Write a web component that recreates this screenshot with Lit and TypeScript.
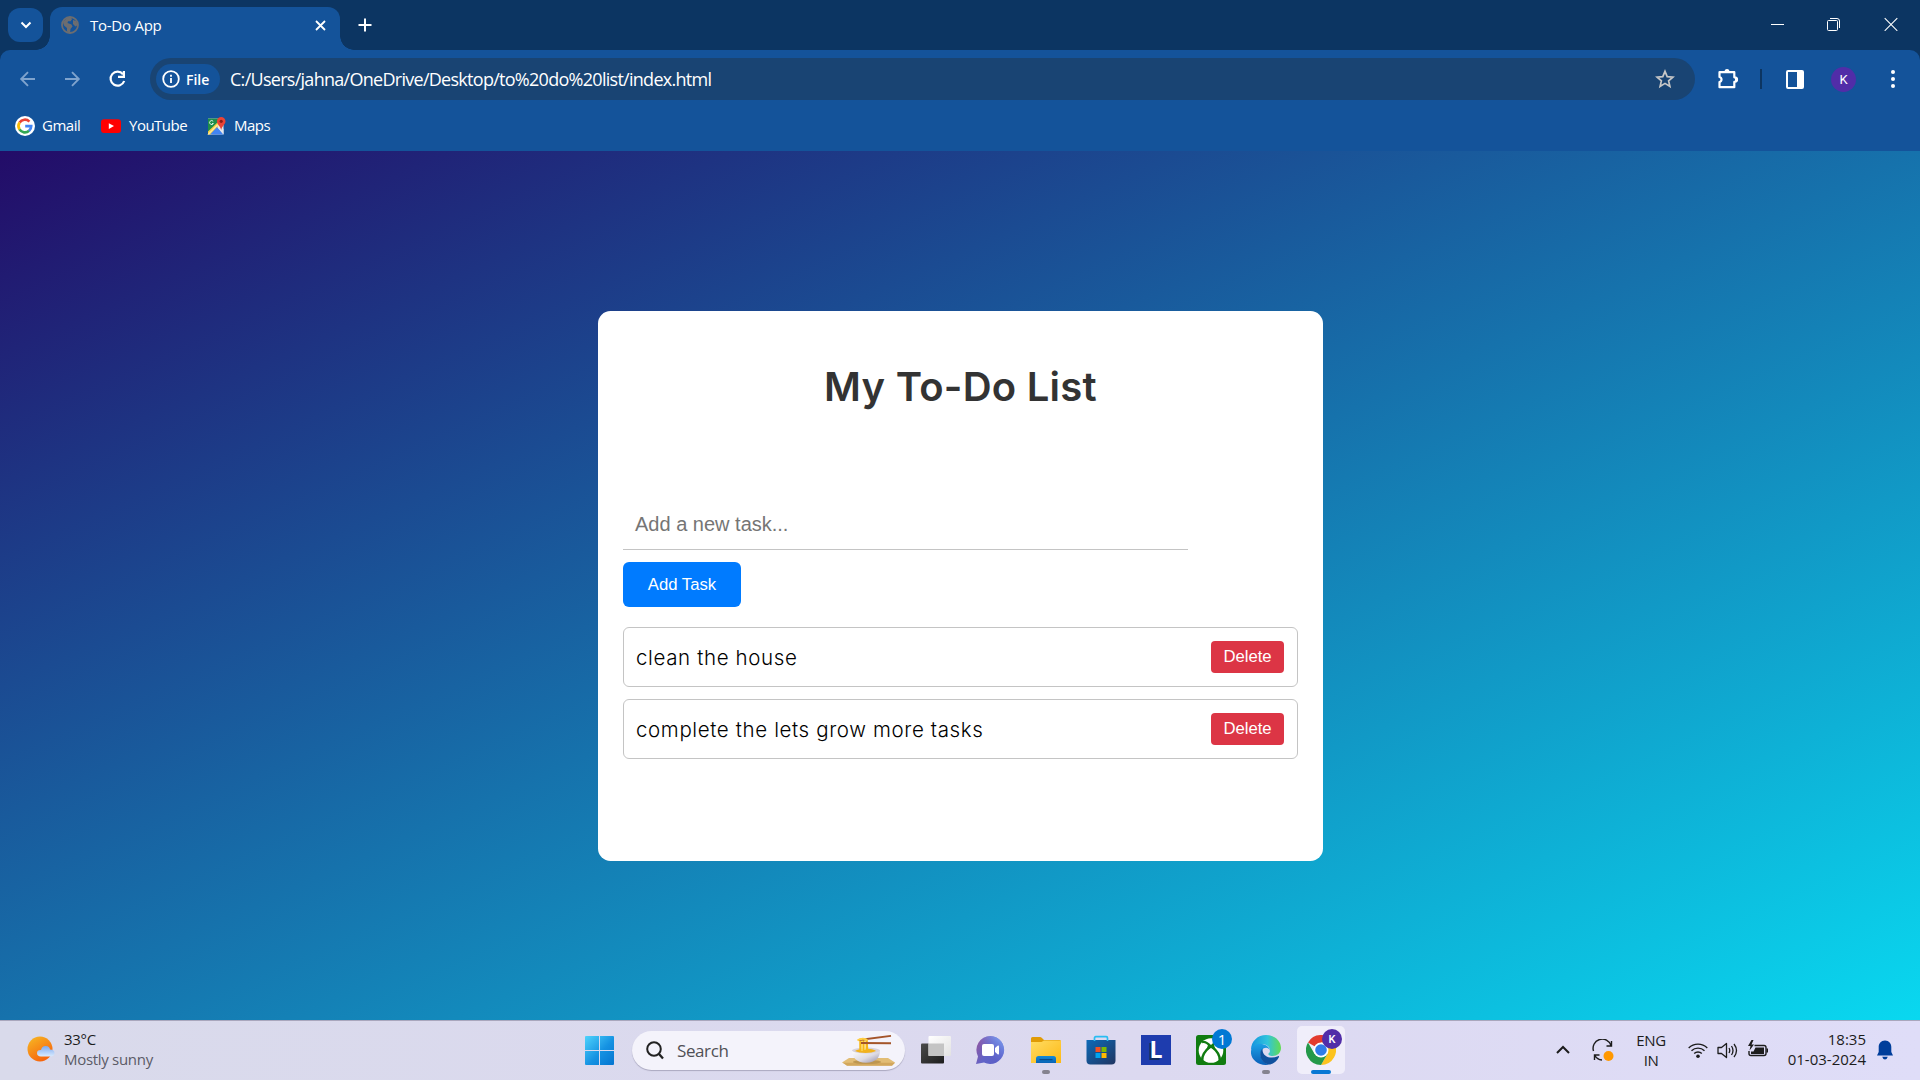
import { LitElement, html, css, svg } from "lit";
import { customElement } from "lit/decorators.js";

const bookmarks = [
  {
    name: "Gmail",
    cls: "gmail",
    icon: svg`<svg width="20" height="20" viewBox="0 0 20 20"><circle cx="10" cy="10" r="10" fill="#fff"/><g fill="none" stroke-width="2.7"><path d="M4.6 6.6A6.3 6.3 0 0 1 14.4 5.6" stroke="#ea4335"/><path d="M4.6 6.5a6.3 6.3 0 0 0 0 7" stroke="#fbbc05"/><path d="M4.5 13.4a6.3 6.3 0 0 0 9.6 1.4" stroke="#34a853"/><path d="M10.2 10.1h6a6.2 6.2 0 0 1-2.2 4.8" stroke="#4285f4"/></g></svg>`,
  },
  {
    name: "YouTube",
    cls: "youtube",
    icon: svg`<svg width="20" height="20" viewBox="0 0 20 20"><rect y="3.2" width="20" height="13.8" rx="3" fill="#f00"/><path d="M7.8 7.2v5.8l5.2-2.9z" fill="#fff"/></svg>`,
  },
  {
    name: "Maps",
    cls: "maps",
    icon: svg`<svg width="20" height="20" viewBox="0 0 20 20"><path d="M1 2.5h15.5V18.500H1z" fill="#e8eaed"/><path d="M1 2.500h11.500v6L1 18z" fill="#1e8e4a"/><path d="M1 18.500V15.500L11 6l3 2.500-9 10z" fill="#fbd043"/><path d="M3 18.500l7-7.500 6.500 7.500z" fill="#4285f4"/><path d="M12 8.500l4.500 4.500v5.500L10.500 11z" fill="#e4e6ea"/><path d="M1 18.500L11 8.500" stroke="#fff" stroke-width=".8"/><path d="M6.200 5.300A2 2 0 1 0 6.400 7.500H5" fill="none" stroke="#d9f0df" stroke-width="1"/><path d="M14.200 1a4.300 4.300 0 0 1 4.300 4.300c0 3-3 4-4.300 8.700-1.300-4.700-4.300-5.700-4.300-8.700A4.300 4.300 0 0 1 14.200 1z" fill="#ea4335"/><circle cx="14.200" cy="5.300" r="1.600" fill="#8c1d18"/></svg>`,
  },
];

const noodles = svg`<svg width="54" height="32" viewBox="0 0 54 32">
  <path d="M7 23h39l7 4.500-3 3H5l-5-3z" fill="#e2bd75"/><path d="M1 27.800h52l-3 2.900H5z" fill="#d2a75c"/>
  <ellipse cx="25" cy="27" rx="14" ry="2" fill="#bd9650"/>
  <path d="M10 15.500h28c0 7-4 12-14 12.300C14 27.500 10 22 10 15.500z" fill="url(#bowl)"/>
  <defs><linearGradient id="bowl" x1="0" y1="0" x2="1" y2="1"><stop stop-color="#fff"/><stop offset=".55" stop-color="#dddbe4"/><stop offset="1" stop-color="#928ca6"/></linearGradient></defs>
  <ellipse cx="24" cy="15.500" rx="14" ry="2.900" fill="#d7d2dc"/><path d="M13 16c4-3 18-3 21 0-5 2.500-16 2.500-21 0z" fill="#f1b21f"/>
  <path d="M18.500 4v12M21.500 4.500v11M24.500 4.500L25 15" stroke="#f7b717" stroke-width="2.500"/><path d="M20 5v11M23 5v10" stroke="#ffe27a" stroke-width="1"/>
  <path d="M17 5L49 .9M19 8l30 .2" stroke="#a4552a" stroke-width="1.900"/><path d="M15.500 5.500c3-2.500 8-2.500 10 0" stroke="#ffcf42" stroke-width="2" fill="none"/>
</svg>`;

const apps = {
  view: svg`<svg width="30" height="30" viewBox="0 0 30 30"><defs><linearGradient id="dk" x1="0" y1="0" x2="1" y2="1"><stop stop-color="#4b4b4b"/><stop offset="1" stop-color="#1d1d1d"/></linearGradient><linearGradient id="lt" x1="0" y1="0" x2="1" y2="1"><stop stop-color="#fff"/><stop offset="1" stop-color="#e2e2e2"/></linearGradient></defs><rect y="8.500" width="23" height="20" rx="1" fill="url(#dk)"/><rect x="7.500" y="1" width="22.500" height="20" rx="1" fill="url(#lt)"/><path d="M7.500 8.500H23V21H7.500z" fill="#c4c4c4"/></svg>`,
  chat: svg`<svg width="30" height="30" viewBox="1 0 30 30"><defs><linearGradient id="ch" x1=".1" y1=".2" x2=".9" y2=".7"><stop stop-color="#8b58a6"/><stop offset=".5" stop-color="#6264c7"/><stop offset="1" stop-color="#5b5fc7"/></linearGradient><linearGradient id="ch2" x1=".4" y1=".6" x2="1" y2="0"><stop stop-color="#6c7be0" stop-opacity="0"/><stop offset="1" stop-color="#84aef8"/></linearGradient></defs><path d="M15.500 1A14 14 0 1 1 9 27.600L1 29l2-7.500A14 14 0 0 1 15.500 1z" fill="url(#ch)"/><path d="M15.500 1A14 14 0 1 1 9 27.600L1 29l2-7.500A14 14 0 0 1 15.500 1z" fill="url(#ch2)"/><rect x="7" y="9" width="12" height="12" rx="2" fill="#fff"/><path d="M20 13l2.600-2.200q1.400-.8 1.400.8v6.800q0 1.600-1.400.8L20 17z" fill="#fff"/></svg>`,
  files: svg`<svg width="30" height="30" viewBox="0 0 30 30"><defs><linearGradient id="fo" x1="0" y1="0" x2="1" y2="1"><stop stop-color="#ffdc63"/><stop offset="1" stop-color="#fdb914"/></linearGradient><linearGradient id="fb" x1="0" y1="0" x2="0" y2="1"><stop stop-color="#128ad8"/><stop offset="1" stop-color="#0a64b5"/></linearGradient></defs><path d="M0 9V3.500Q0 2 1.500 2H9q1 0 1.700.700L13 5h15.500Q30 5 30 6.500V9z" fill="#e09b06"/><path d="M0 7h10.500l2.500-1.500h17V28H0z" fill="url(#fo)"/><path d="M5 28v-4.500Q5 21 7.500 21h15q2.500 0 2.500 2.500V28z" fill="url(#fb)"/><path d="M8.500 24.700h13" stroke="#08427d"/></svg>`,
  store: svg`<svg width="30" height="30" viewBox="0 0 30 30"><defs><linearGradient id="st" x1="0" y1="0" x2="1" y2="1"><stop stop-color="#0d6ab8"/><stop offset="1" stop-color="#203561"/></linearGradient></defs><path d="M.5 5h29v20.500q0 4-4 4h-21q-4 0-4-4z" fill="url(#st)"/><path d="M8.500 6V3q0-1.300 1.300-1.300h10.400q1.300 0 1.300 1.300v3" stroke="#29bdf2" stroke-width="1.700" fill="none"/><path d="M9.500 12h5v5h-5z" fill="#f25022"/><path d="M15.500 12h5v5h-5z" fill="#7fba00"/><path d="M9.500 18h5v5h-5z" fill="#00a4ef"/><path d="M15.500 18h5v5h-5z" fill="#ffb900"/></svg>`,
  xbox: svg`<svg width="30" height="30" viewBox="0 0 30 30"><rect width="30" height="30" rx="2.500" fill="#107c10"/><circle cx="15" cy="15.500" r="12.300" fill="#fff"/><path d="M6 7.200C9 6 12 8.500 15 11.500c3-3 6-5.500 9-4.300" fill="none" stroke="#107c10" stroke-width="2.200"/><path d="M15 11C10.500 14.500 5.500 20 6.200 26M15 11c4.500 3.500 9.500 9 8.800 15" fill="none" stroke="#107c10" stroke-width="2.400"/><path d="M12 10h6l1.500 4.500L15 13l-4.500 1.500z" fill="#107c10"/></svg>`,
  edge: svg`<svg width="30" height="30" viewBox="0 0 30 30"><defs><linearGradient id="e1" x1="0" y1=".5" x2="1" y2=".5"><stop stop-color="#1494df"/><stop offset=".55" stop-color="#31c4dc"/><stop offset="1" stop-color="#63dc51"/></linearGradient><linearGradient id="e2" x1="0" y1="0" x2="0" y2="1"><stop stop-color="#1ba1e6"/><stop offset="1" stop-color="#0a5fb8"/></linearGradient></defs><path d="M0 15C0 6 7 0 15 0c9 0 15 6 15 13 0 5-4 8-8.500 8-3.500 0-4.500-1.500-4-2.500 1.500-1 1.500-2.500 1.500-3.500C18 8 6 7 0 15z" fill="url(#e1)"/><path d="M0 16C1 10 6 8 11 9c5 1 8 4 8 7-1-4-6-4-8-1-4 6 1 14 8 14.500-11 2.500-20-5-19-13.500z" fill="url(#e2)"/><path d="M11.500 13.500C7 18 9 29 19 29.500c4-1 7.500-4 9-7.500.3-1-.4-1.200-1-.8C20 24.500 11 22 11.500 13.500z" fill="#10519e"/></svg>`,
  chrome: svg`<svg width="30" height="30" viewBox="0 0 30 30"><path d="M15 15L2 7.500A15 15 0 0 1 28 7.500H15z" fill="#e33b2e"/><path d="M15 7.500h13A15 15 0 0 1 15 30l6.500-11.300z" fill="#fcc31e"/><path d="M2 7.500A15 15 0 0 0 15 30l6.500-11.300L8.500 18.700z" fill="#25994a"/><circle cx="15" cy="15" r="7.500" fill="#fff"/><circle cx="15" cy="15" r="5.800" fill="#2f7de9"/></svg>`,
};

@customElement("app-root")
export class AppRoot extends LitElement {
  static styles = css`
    :host { display: block; font-family: "Open Sans", "Noto Sans", sans-serif; }
    * { box-sizing: border-box; }
    svg { display: block; flex: none; }
    .screen { width: 1920px; height: 1080px; display: flex; flex-direction: column; overflow: hidden; }
    .tabs { height: 50px; background: #0c3562; display: flex; color: #fff; }
    .drop { width: 50px; padding: 8px 0 0 8px; }
    .drop-btn { width: 35px; height: 34px; border-radius: 12px; background: #14539a; display: grid; place-items: center; }
    .tab { width: 290px; height: 43px; margin-top: 7px; border-radius: 12px 12px 0 0; background: #14539a; display: flex; align-items: center; padding: 0 14.500px 7px 11px; position: relative; font-size: 15px; letter-spacing: -0.25px; }
    .tab::before, .tab::after { content: ""; position: absolute; bottom: 0; width: 14px; height: 14px; }
    .tab::before { left: -14px; background: radial-gradient(circle at 0 0, transparent 13.500px, #14539a 14px); }
    .tab::after { right: -14px; background: radial-gradient(circle at 100% 0, transparent 13.500px, #14539a 14px); }
    .tab-title { flex: 1; margin-left: 11px; }
    .plus { margin: 18px 0 0 18px; }
    .win { margin-left: auto; display: flex; gap: 43px; padding: 17px 22px 0 0; }
    .corner { background: #0c3562; }
    .toolbar { height: 58px; background: #14539a; border-radius: 10px 10px 0 0; display: flex; align-items: center; color: #fff; }
    .nav { width: 150px; display: flex; padding-left: 18px; gap: 25px; }
    .url { width: 1545px; height: 42px; border-radius: 21px; background: #194473; display: flex; align-items: center; padding: 0 20px 0 6px; font-size: 18px; letter-spacing: -0.72px; }
    .file { width: 64px; height: 30px; border-radius: 15px; background: #14539a; display: flex; align-items: center; gap: 6px; padding-left: 6px; font-size: 14px; font-weight: 600; margin-right: 10px; letter-spacing: 0; }
    .star { margin-left: auto; }
    .tools { display: flex; align-items: center; }
    .ext { margin-left: 22px; }
    .bar { width: 2px; height: 20px; background: #0c3562; margin-left: 21px; }
    .side { margin-left: 24px; }
    .avatar { width: 25px; height: 25px; border-radius: 50%; background: #512da8; margin-left: 27px; display: grid; place-items: center; font: 13px Roboto, sans-serif; }
    .dots { margin-left: 34.500px; }
    .marks { height: 43px; background: #14539a; color: #fff; display: flex; align-items: center; font-size: 15px; letter-spacing: -0.5px; padding: 0 0 8px 15px; }
    .mark { display: flex; align-items: center; gap: 7px; }
    .mark span { margin-top: -1px; }
    .gmail { width: 86px; } .youtube { width: 106px; gap: 8px; }
    .page { height: 869px; background: linear-gradient(to bottom right, #230c68, #09d8f0); padding-top: 160px; }
    .card { width: 725px; height: 550px; margin-left: 598px; background: #fff; border-radius: 12.500px; padding: 46px 25px 0; display: flex; flex-direction: column; align-items: flex-start; font-family: "Liberation Sans", sans-serif; }
    .title { margin: 0; align-self: center; font: 600 40px/60px Inter, sans-serif; color: #333; letter-spacing: 0.25px; white-space: nowrap; }
    .entry { margin-top: 82px; width: 565px; height: 51px; border-bottom: 1px solid #c4c4c4; font-size: 20px; line-height: 50px; color: #757575; padding-left: 12px; }
    .add { margin-top: 12px; width: 118px; height: 45px; border-radius: 6px; background: #007bff; color: #fff; font-size: 16.700px; line-height: 45px; text-align: center; }
    .tasks { width: 675px; margin-top: 20px; display: flex; flex-direction: column; gap: 12px; }
    .task { height: 60px; border: 1px solid #c4c4c4; border-radius: 6px; display: flex; align-items: center; justify-content: space-between; padding: 0 13px 0 12px; font: 300 20.500px Inter, sans-serif; color: #000; }
    .task-name { white-space: nowrap; letter-spacing: 0.63px; }
    .del { width: 73px; height: 32px; background: #dc3545; color: #fff; border-radius: 4px; font: 16.700px/31px "Liberation Sans", sans-serif; text-align: center; }
    .taskbar { height: 60px; background: linear-gradient(90deg, #d9daeb, #dcd9f0 60%, #dfddf8); border-top: 1px solid #a9a7bd; display: flex; color: #1c1c1c; }
    .weather { width: 584px; display: flex; padding: 8px 0 0 27px; gap: 9px; font-size: 15px; line-height: 20px; letter-spacing: -0.3px; }
    .sky { margin-top: 7px; }
    .muted { color: #5b5b66; }
    .start { margin: 15px 0 0 1px; }
    .search { width: 273px; height: 39px; border-radius: 20px; background: #f4f3fb; box-shadow: 0 1px 1px #aaa8bf; margin: 10px 0 0 18px; display: flex; align-items: center; padding: 0 9px 0 14px; font-size: 17px; letter-spacing: -0.4px; color: #505055; gap: 13px; }
    .food { margin-left: auto; }
    .apps { display: flex; margin-left: 7px; }
    .app { width: 48px; height: 48px; margin: 5px 7px 0 0; border-radius: 5px; display: flex; flex-direction: column; align-items: center; padding-top: 9px; position: relative; }
    .on { background: #f0eefa; }
    .pip { width: 8px; height: 4px; border-radius: 2px; background: #85838f; margin-top: 5px; }
    .line { width: 20px; background: #0878d4; }
    .badge { position: absolute; right: 3px; top: 3px; width: 20px; height: 20px; border-radius: 50%; background: #0078d4; color: #fff; display: grid; place-items: center; font-size: 15px; line-height: 1; }
    .kb { background: #512da8; font: 500 11px Roboto, sans-serif; }
    .letter { width: 30px; height: 30px; background: #1e3cae; color: #fff; font: bold 23px/29px "Open Sans", sans-serif; text-align: center; text-shadow: -2px 2px #102c60; }
    .tray { margin-left: auto; display: flex; align-items: flex-start; }
    .up { margin-top: 24px; } .sync { margin: 18px 0 0 22px; }
    .lang { width: 36px; margin: 9px 0 0 19px; text-align: center; font-size: 15px; line-height: 20px; letter-spacing: -0.4px; }
    .sys { display: flex; gap: 9px; margin: 18px 0 0 19px; }
    .clock { width: 82px; margin: 8px 0 0 15px; text-align: right; font-size: 15px; line-height: 20px; letter-spacing: 0; white-space: nowrap; }
    .bell { margin: 19px 27px 0 11px; }
  `;

  render() {
    return html`<div class="screen">
      <div class="tabs">
        <div class="drop"><div class="drop-btn"><svg width="12" height="8" viewBox="0 0 12 8"><path d="M1.500 1.500L6 6l4.500-4.500" fill="none" stroke="#fff" stroke-width="2"/></svg></div></div>
        <div class="tab">
          <svg width="18" height="18" viewBox="0 0 18 18"><circle cx="9" cy="9" r="8" fill="none" stroke="#6c6d70" stroke-width="1.800"/><path d="M2 6l4-4 4-.8 1 2-1.500 2H7L6.500 7l4 1.500 1 2-2 2.500-.5 4-3-1.500V12L3 9.500zM12 4l3 1 2 4-2.500 1.500L12 8z" fill="#6c6d70"/></svg>
          <span class="tab-title">To-Do App</span>
          <svg width="11" height="11" viewBox="0 0 11 11"><path d="M1 1l9 9M10 1l-9 9" stroke="#fff" stroke-width="1.800"/></svg>
        </div>
        <svg class="plus" width="14" height="14" viewBox="0 0 14 14"><path d="M7 .5v13M.5 7h13" stroke="#fff" stroke-width="2"/></svg>
        <div class="win">
          <svg width="14" height="14" viewBox="0 0 14 14"><path d="M1 7.500h13" stroke="#fff"/></svg>
          <svg width="14" height="14" viewBox="0 0 14 14"><rect x=".5" y="3.500" width="10" height="10" rx="1" fill="none" stroke="#fff"/><path d="M3 1.500h7q2.500 0 2.500 2.500v7" fill="none" stroke="#fff"/></svg>
          <svg width="14" height="14" viewBox="0 0 14 14"><path d="M.7 1.200l12.600 12.600M13.300 1.200L.7 13.800" stroke="#fff" stroke-width="1.100"/></svg>
        </div>
      </div>
      <div class="corner"><div class="toolbar">
        <div class="nav">
          <svg width="20" height="20" viewBox="0 0 20 20"><path d="M17 10H3.500M10 3.200L3.200 10l6.800 6.800" fill="none" stroke="#7fa3cd" stroke-width="1.900"/></svg>
          <svg width="20" height="20" viewBox="0 0 20 20"><path d="M2 10h13.500M9 3.200L15.800 10 9 16.800" fill="none" stroke="#7fa3cd" stroke-width="1.900"/></svg>
          <svg width="20" height="20" viewBox="0 0 20 20"><path d="M15 5.200A7 7 0 1 0 16.200 12" fill="none" stroke="#fff" stroke-width="2.200"/><path d="M17 2v7h-7V6.800h4.800V2z" fill="#fff"/></svg>
        </div>
        <div class="url">
          <div class="file"><svg width="18" height="18" viewBox="0 0 18 18"><circle cx="9" cy="9" r="7.800" fill="none" stroke="#fff" stroke-width="1.800"/><path d="M9 8v5M9 4.800v1.900" stroke="#fff" stroke-width="1.800"/></svg>File</div>
          <span>C:/Users/jahna/OneDrive/Desktop/to%20do%20list/index.html</span>
          <svg class="star" width="20" height="20" viewBox="0 0 20 20"><path d="M10 2.300l2.200 5.300 5.700.5-4.300 3.700 1.300 5.600-4.900-3-4.900 3 1.300-5.600-4.300-3.700 5.700-.5z" fill="none" stroke="#c7c7c7" stroke-width="1.700"/></svg>
        </div>
        <div class="tools">
          <svg class="ext" width="22" height="22" viewBox="0 0 22 22"><path d="M3 4.200h14.300v5.100q2.700 0 2.700 2.300t-2.700 2.300v5.300H2.500v-5.200q2-.5 2-2.500T2.500 9V4.200z" fill="none" stroke="#fff" stroke-width="2.200" stroke-linejoin="round"/><path d="M7.500 4q0-3 2.500-3t2.500 3M18 9q3 .3 3 2.500t-3 2.500" fill="#fff"/></svg>
          <div class="bar"></div>
          <svg class="side" width="18" height="19" viewBox="0 0 18 19"><rect x="1" y="1" width="16" height="17" rx="1" fill="none" stroke="#fff" stroke-width="2"/><path d="M11 1h6v17h-6z" fill="#fff"/></svg>
          <div class="avatar">K</div>
          <svg class="dots" width="4" height="20" viewBox="0 0 4 20"><g fill="#fff"><circle cx="2" cy="3" r="2"/><circle cx="2" cy="10" r="2"/><circle cx="2" cy="17" r="2"/></g></svg>
        </div>
      </div></div>
      <div class="marks">${bookmarks.map((b) => html`<div class="mark ${b.cls}">${b.icon}<span>${b.name}</span></div>`)}</div>
      <div class="page"><div class="card">
        <h1 class="title">My To-Do List</h1>
        <div class="entry">Add a new task...</div>
        <div class="add">Add Task</div>
        <div class="tasks">${["clean the house", "complete the lets grow more tasks"].map((t) => html`<div class="task"><span class="task-name">${t}</span><div class="del">Delete</div></div>`)}</div>
      </div></div>
      <div class="taskbar">
        <div class="weather">
          <svg class="sky" width="28" height="26" viewBox="0 0 28 26"><defs><linearGradient id="sun" x1="0" y1="0" x2=".6" y2="1"><stop stop-color="#f6bb25"/><stop offset="1" stop-color="#f7630c"/></linearGradient><linearGradient id="cl" x1="0" y1="0" x2="0" y2="1"><stop stop-color="#7da9ee"/><stop offset="1" stop-color="#d9ebff"/></linearGradient></defs><circle cx="13" cy="13" r="12.500" fill="url(#sun)"/><path d="M14 20.500q-4-.3-4-3.500t4-3q1.200-4.500 5-4 3.500.3 4 3.500 4.500 0 4.500 3.500t-4.500 3.500z" fill="url(#cl)"/></svg>
          <div><div>33°C</div><div class="muted">Mostly sunny</div></div>
        </div>
        <svg class="start" width="29" height="29" viewBox="0 0 29 29"><defs><linearGradient id="w" gradientUnits="userSpaceOnUse" x1="0" y1="0" x2="29" y2="29"><stop stop-color="#4fd3fc"/><stop offset=".55" stop-color="#1592e2"/><stop offset="1" stop-color="#0474d0"/></linearGradient></defs><path d="M1 0h13v14H0V1q0-1 1-1zM15 0h13q1 0 1 1v13H15zM0 15h14v14H1q-1 0-1-1zM15 15h14v13q0 1-1 1H15z" fill="url(#w)"/></svg>
        <div class="search"><svg width="18" height="19" viewBox="0 0 18 19"><circle cx="8" cy="8" r="6.800" fill="none" stroke="#222" stroke-width="2"/><path d="M12.800 12.800L17 17.500" stroke="#222" stroke-width="2.300"/></svg><span>Search</span><div class="food">${noodles}</div></div>
        <div class="apps">
          <div class="app">${apps.view}</div>
          <div class="app">${apps.chat}</div>
          <div class="app">${apps.files}<i class="pip"></i></div>
          <div class="app">${apps.store}</div>
          <div class="app"><div class="letter">L</div></div>
          <div class="app">${apps.xbox}<div class="badge">1</div></div>
          <div class="app">${apps.edge}<i class="pip"></i></div>
          <div class="app on">${apps.chrome}<i class="pip line"></i><div class="badge kb">K</div></div>
        </div>
        <div class="tray">
          <svg class="up" width="14" height="9" viewBox="0 0 14 9"><path d="M1 8l6-6 6 6" fill="none" stroke="#1c1c1c" stroke-width="2"/></svg>
          <svg class="sync" width="22" height="24" viewBox="0 0 22 24"><path d="M1.500 12A9 9 0 0 1 19 6.500M19.500 2v5h-5M2.500 21v-5h5M3 16.500q2 4 7 4.500" fill="none" stroke="#1c1c1c" stroke-width="1.400"/><circle cx="16.500" cy="17" r="5" fill="#ff9800"/></svg>
          <div class="lang">ENG<br>IN</div>
          <div class="sys">
            <svg width="20" height="22" viewBox="0 0 20 22"><g fill="none" stroke="#1c1c1c" stroke-width="1.400"><path d="M.7 9a13.200 13.200 0 0 1 18.600 0M3.500 11.800a9.300 9.300 0 0 1 13 0M6.200 14.600a5.400 5.400 0 0 1 7.600 0"/></g><circle cx="10" cy="17.300" r="1.800" fill="#1c1c1c"/></svg>
            <svg width="21" height="22" viewBox="0 0 21 22"><path d="M1 8.500v6h3.500L9.500 18.500V4.500L4.500 8.500zM12 9q1.500 2.500 0 5M14.500 7q3 4.500 0 9M17 5q5 6.500 0 13" fill="none" stroke="#1c1c1c" stroke-width="1.300" stroke-linejoin="round"/></svg>
            <svg width="22" height="22" viewBox="0 0 22 22"><path d="M7.500 6.500H17q2 0 2 2v6q0 2-2 2H4q-2 0-2-2V12" fill="none" stroke="#1c1c1c" stroke-width="1.400"/><path d="M8.500 8.500h8.500v6.500H4v-2.500h2.500zM19.500 9.500h1.500v4h-1.500z" fill="#1c1c1c"/><path d="M4.500 1L1 7h2.500L2.500 11.500 7 5.500H4.500L6.500 1z" fill="#1c1c1c"/></svg>
          </div>
          <div class="clock">18:35<br>01-03-2024</div>
          <svg class="bell" width="16" height="20" viewBox="0 0 16 20"><path d="M8 .5c4 0 6.300 3 6.300 6.500v5l1.700 3.500H0L1.700 12V7C1.700 3.500 4 .5 8 .5zM5.200 16.800h5.600Q10 19.500 8 19.500t-2.800-2.700z" fill="#003e9b"/></svg>
        </div>
      </div>
    </div>`;
  }
}
